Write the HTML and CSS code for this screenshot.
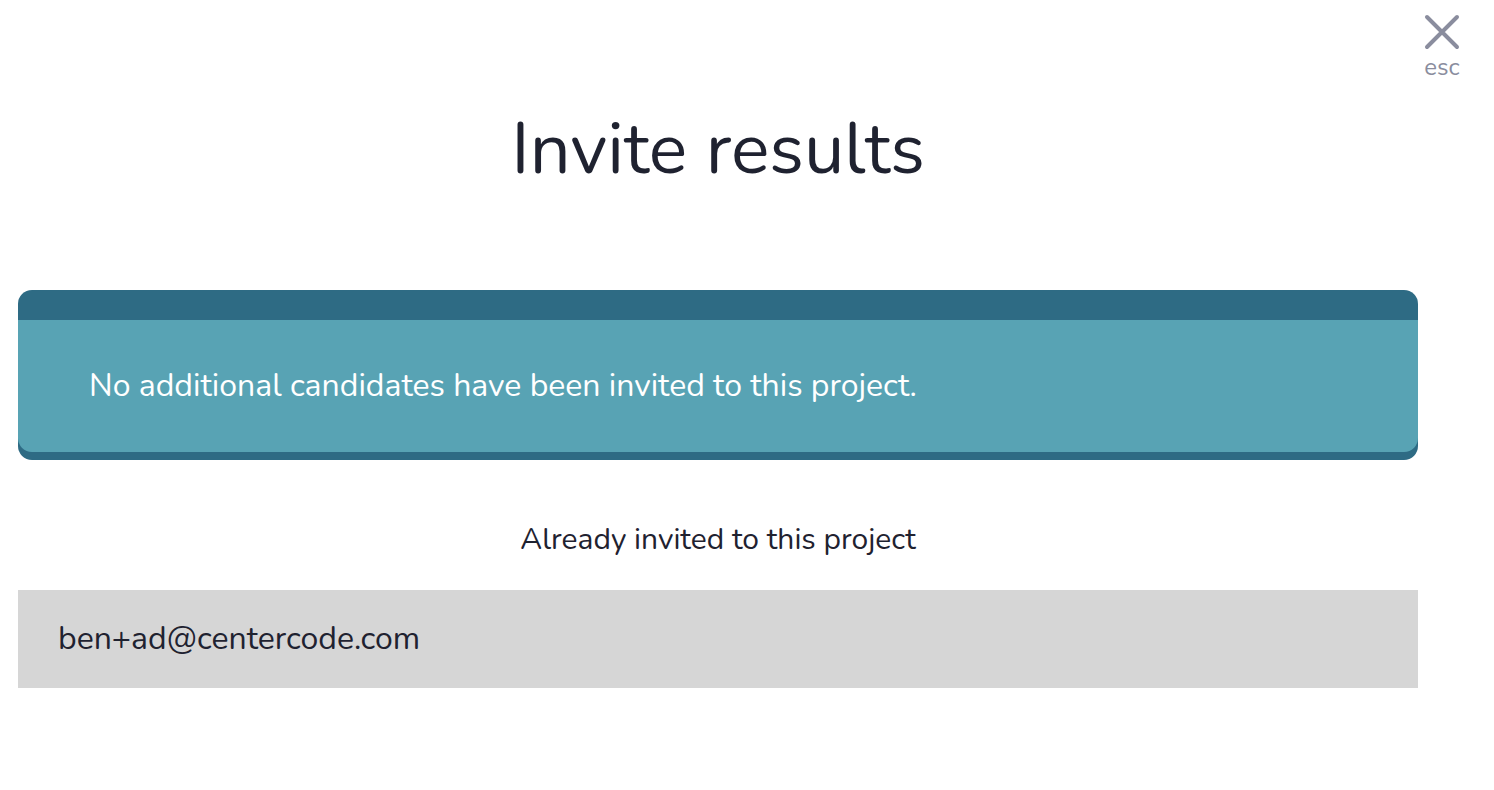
FILE: index.html
```html
<!DOCTYPE html>
<html lang="en">
<head>
    <meta charset="UTF-8">
    <title>Invite results</title>
    <link rel="stylesheet" href="styles.css">
</head>
<body>
    <button class="cerrar" type="button">
        <svg width="36" height="36" viewBox="0 0 36 36">
            <path d="M3 3 L33 33 M33 3 L3 33" stroke="#8a8d9e" stroke-width="4" stroke-linecap="round" fill="none"/>
        </svg>
        <span>esc</span>
    </button>

    <div class="contenido">
        <h1>Invite results</h1>

        <div class="aviso">
            <div class="aviso-cabecera"></div>
            <div class="aviso-cuerpo">
                No additional candidates have been invited to this project.
            </div>
        </div>

        <h2>Already invited to this project</h2>

        <div class="fila">ben+ad@centercode.com</div>
    </div>
</body>
</html>
```

FILE: styles.css
```css
body {
    margin: 0;
    font-family: "Nunito", Lato, "Noto Sans", sans-serif;
    color: #1f2230;
    background-color: #fff;
}

.contenido {
    padding: 0 76px 0 18px;
}

h1 {
    font-size: 72px;
    font-weight: normal;
    text-align: center;
    margin: 0;
    padding-top: 104px;
    line-height: 90px;
    height: 186px;
}

.aviso {
    background-color: #2e6b84;
    border-radius: 14px;
    padding-bottom: 8px;
    overflow: hidden;
}

.aviso-cabecera {
    height: 30px;
}

.aviso-cuerpo {
    background-color: #58a3b4;
    color: #fff;
    font-size: 32px;
    padding: 0 71px;
    height: 132px;
    line-height: 132px;
    border-radius: 0 0 14px 14px;
}

h2 {
    font-size: 30px;
    font-weight: normal;
    text-align: center;
    margin: 0;
    padding-top: 60px;
    line-height: 40px;
    height: 70px;
}

.fila {
    background-color: #d6d6d6;
    font-size: 32px;
    height: 98px;
    line-height: 98px;
    padding: 0 40px;
}

.cerrar {
    position: absolute;
    top: 14px;
    right: 34px;
    background: none;
    border: none;
    padding: 0;
    cursor: pointer;
    display: flex;
    flex-direction: column;
    align-items: center;
    color: #8a8d9e;
    font-family: inherit;
    font-size: 24px;
    line-height: 30px;
}

.cerrar span {
    margin-top: 2px;
}
```
